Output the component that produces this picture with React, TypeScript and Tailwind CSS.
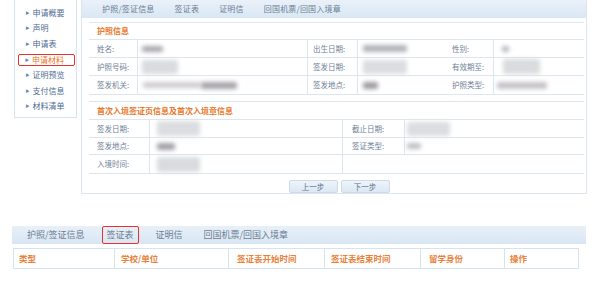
import React from 'react';

const font = { fontFamily: '"Noto Sans CJK SC", "Noto Sans", sans-serif' };

const sideItems = ['申请概要', '声明', '申请表', '申请材料', '证明预览', '支付信息', '材料清单'];
const tabs = ['护照/签证信息', '签证表', '证明信', '回国机票/回国入境章'];

// 模糊处理的数值块
const Blur: React.FC<{ className: string }> = ({ className }) => (
  <div className={`rounded-[2px] blur-[2px] ${className}`} />
);

const Label: React.FC<{ text: string; className?: string }> = ({ text, className = '' }) => (
  <div className={`flex items-center text-[7.5px] text-[#6f8098] ${className}`}>{text}</div>
);

const App: React.FC = () => {
  return (
    <div className="w-[596px] h-[288px] bg-white overflow-hidden" style={font}>
      {/* 上半部分 */}
      <div className="flex h-[194px]">
        {/* 左侧菜单 */}
        <div className="ml-[14px] w-[63px] h-[118px] border border-t-0 border-[#d9e3ee] pt-[5px] pl-[3px]">
          {sideItems.map((item) =>
            item === '申请材料' ? (
              <div
                key={item}
                className="flex items-center h-[12px] my-[2px] w-[57px] border-[1.5px] border-[#e5322d] rounded-[2px] pl-[6px] text-[8px] text-[#e8782c]"
              >
                <span className="text-[4px] text-[#5b86b8] mr-[3px]">▶</span>
                {item}
              </div>
            ) : (
              <div key={item} className="flex items-center h-[15.5px] pl-[7.5px] text-[8px] text-[#4d6c92]">
                <span className="text-[4px] text-[#5b86b8] mr-[3px]">▶</span>
                {item}
              </div>
            )
          )}
        </div>

        {/* 主面板 */}
        <div className="ml-[4px] w-[506px] border-l border-r border-b border-[#dde6ef]">
          <div className="flex items-center h-[18px] bg-gradient-to-b from-[#eaf1f9] to-[#d9e7f4] text-[8px] text-[#6c7d93] tracking-[0.2px]">
            <span className="ml-[20px]">{tabs[0]}</span>
            <span className="ml-[20px]">{tabs[1]}</span>
            <span className="ml-[20px]">{tabs[2]}</span>
            <span className="ml-[20px]">{tabs[3]}</span>
          </div>

          {/* 护照信息 */}
          <div className="ml-[7px] mr-[2px] mt-[4px] border-t border-b border-[#dde6ef]">
            <div className="flex items-center h-[17px] pl-[8px] text-[8px] font-bold text-[#e8782c] border-b border-[#dde6ef]">
              护照信息
            </div>
            <div className="grid grid-cols-[49px_170px_50px_90px_46px_1fr] grid-rows-[18px_18px_18px] [&>div]:border-[#dde6ef]">
              <Label text="姓名:" className="pl-[8px] border-r border-b" />
              <div className="flex items-center border-r border-b"><Blur className="ml-[4px] w-[21px] h-[6px] bg-[#a9a9ad]" /></div>
              <Label text="出生日期:" className="pl-[5px] border-r border-b" />
              <div className="flex items-center border-b"><Blur className="ml-[5px] w-[44px] h-[7px] bg-[#b2b3b8]" /></div>
              <Label text="性别:" className="pl-[4px] border-r border-b" />
              <div className="flex items-center border-b"><Blur className="ml-[8px] w-[7px] h-[6px] bg-[#b8b8bc]" /></div>

              <Label text="护照号码:" className="pl-[8px] border-r border-b" />
              <div className="flex items-center border-r border-b"><Blur className="ml-[4px] w-[36px] h-[14px] bg-[#dadbdf]" /></div>
              <Label text="签发日期:" className="pl-[5px] border-r border-b" />
              <div className="flex items-center border-b"><Blur className="ml-[5px] w-[44px] h-[14px] bg-[#dcdde0]" /></div>
              <Label text="有效期至:" className="pl-[4px] border-r border-b" />
              <div className="flex items-center border-b"><Blur className="ml-[9px] w-[37px] h-[15px] bg-[#dadbde]" /></div>

              <Label text="签发机关:" className="pl-[8px] border-r" />
              <div className="flex items-center border-r">
                <Blur className="ml-[5px] w-[58px] h-[6px] bg-[#cdcdd1]" />
                <Blur className="w-[36px] h-[7px] bg-[#a5a5aa]" />
              </div>
              <Label text="签发地点:" className="pl-[5px] border-r" />
              <div className="flex items-center"><Blur className="ml-[5px] w-[15px] h-[7px] bg-[#9c9ca1]" /></div>
              <Label text="护照类型:" className="pl-[4px] border-r" />
              <div className="flex items-center"><Blur className="ml-[3px] w-[50px] h-[7px] bg-[#c4c4c8]" /></div>
            </div>
          </div>

          {/* 首次入境信息 */}
          <div className="ml-[7px] mr-[2px] mt-[6px] border-t border-b border-[#dde6ef]">
            <div className="flex items-center h-[18px] pl-[8px] text-[8px] font-bold text-[#e8782c] border-b border-[#dde6ef]">
              首次入境签证页信息及首次入境章信息
            </div>
            <div className="grid grid-cols-[61px_193px_62px_1fr] grid-rows-[18px_17px_18px] [&>div]:border-[#dde6ef]">
              <Label text="签发日期:" className="pl-[8px] border-r border-b" />
              <div className="flex items-center border-r border-b"><Blur className="ml-[7px] w-[43px] h-[15px] bg-[#dcdde0]" /></div>
              <Label text="截止日期:" className="pl-[9px] border-r border-b" />
              <div className="flex items-center border-b"><Blur className="ml-[2px] w-[43px] h-[14px] bg-[#dcdde0]" /></div>

              <Label text="签发地点:" className="pl-[8px] border-r border-b" />
              <div className="flex items-center border-r border-b"><Blur className="ml-[7px] w-[18px] h-[7px] bg-[#a2a2a7]" /></div>
              <Label text="签证类型:" className="pl-[9px] border-r border-b" />
              <div className="flex items-center border-b"><Blur className="ml-[2px] w-[14px] h-[6px] bg-[#c0c0c4]" /></div>

              <Label text="入境时间:" className="pl-[8px] border-r" />
              <div className="flex items-center border-r"><Blur className="ml-[7px] w-[43px] h-[15px] bg-[#dadbde]" /></div>
              <div />
              <div />
            </div>
          </div>

          <div className="flex justify-center gap-[3px] mt-[6px] pl-[10px]">
            <button className="w-[49px] h-[13px] rounded-[2px] border border-[#cbdbea] bg-gradient-to-b from-[#eef4fa] to-[#dce8f4] text-[7.5px] text-[#5d6f86] leading-none">
              上一步
            </button>
            <button className="w-[49px] h-[13px] rounded-[2px] border border-[#cbdbea] bg-gradient-to-b from-[#eef4fa] to-[#dce8f4] text-[7.5px] text-[#5d6f86] leading-none">
              下一步
            </button>
          </div>
        </div>
      </div>

      {/* 下半部分 */}
      <div className="mt-[32px] ml-[12px] w-[574px]">
        <div className="flex items-center h-[18px] bg-gradient-to-b from-[#e8f0f8] to-[#d8e6f3] text-[9px] text-[#6c7d93]">
          <span className="ml-[15px]">{tabs[0]}</span>
          <span className="ml-[17px] px-[4px] h-[18px] flex items-center border-[1.5px] border-[#e5322d] rounded-[2px]">
            {tabs[1]}
          </span>
          <span className="ml-[17px]">{tabs[2]}</span>
          <span className="ml-[21px]">{tabs[3]}</span>
        </div>
        <div className="mt-[4px] ml-[1px] w-[566px] h-[21px] grid grid-cols-[101px_114px_96px_96px_84px_1fr] border border-[#d6e2ee] text-[8.5px] font-bold text-[#e8823a]">
          <div className="flex items-center pl-[5px] border-r border-[#d6e2ee]">类型</div>
          <div className="flex items-center pl-[6px] border-r border-[#d6e2ee]">学校/单位</div>
          <div className="flex items-center pl-[8px] border-r border-[#d6e2ee]">签证表开始时间</div>
          <div className="flex items-center pl-[6px] border-r border-[#d6e2ee]">签证表结束时间</div>
          <div className="flex items-center pl-[8px] border-r border-[#d6e2ee]">留学身份</div>
          <div className="flex items-center pl-[5px]">操作</div>
        </div>
      </div>
    </div>
  );
};

export default App;
